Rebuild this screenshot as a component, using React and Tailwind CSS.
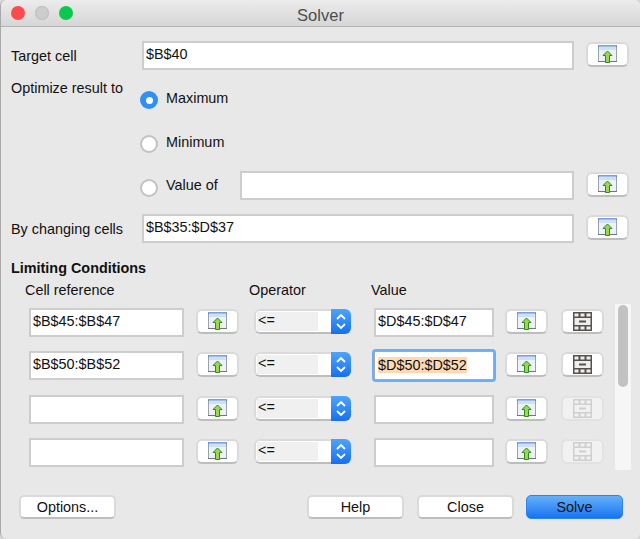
import React from "react";

const inputBase = "h-[29px] border-2 border-[#cdcdcd] bg-white px-[2px] text-[14.4px] leading-[22px] text-[#111]";
const rimmed = "border-2 border-[#dadada] border-b-[#bdbdbd] bg-white";

function RefIcon() {
  return (
    <svg width="19" height="19" viewBox="0 0 19 19">
      <rect x="0.5" y="1" width="18" height="15.5" fill="#eef2f7" stroke="#98a2ad" />
      <rect x="0" y="0.5" width="19" height="1" fill="#2d6fd6" />
      <rect x="1" y="1.5" width="17" height="3.5" fill="#cfdff6" />
      <rect x="0" y="16" width="19" height="1" fill="#6f7680" />
      <path d="M9.5 6 L14 10.5 L11.5 10.5 L11.5 17.5 L7.5 17.5 L7.5 10.5 L5 10.5 Z" fill="#9ad64f" stroke="#2f8a1f" strokeWidth="1" strokeLinejoin="round" />
    </svg>
  );
}

function StripIcon({ off }) {
  const dark = off ? "#cfcfcf" : "#55524e";
  const cell = off ? "#f1f1f1" : "#eeeeee";
  return (
    <svg width="19" height="19" viewBox="0 0 19 19">
      <rect x="0" y="0" width="19" height="19" fill={dark} />
      {[1.5, 7.5, 13.5].map((x) => (
        <React.Fragment key={x}>
          <rect x={x} y="1.5" width="4" height="3" fill={cell} />
          <rect x={x} y="14.5" width="4" height="3" fill={cell} />
        </React.Fragment>
      ))}
      <rect x="1.5" y="6" width="16" height="7" fill={cell} />
      <rect x="6" y="8.5" width="7" height="2" fill={dark} />
    </svg>
  );
}

function RefButton({ className = "" }) {
  return (
    <div className={`mt-[1px] flex h-[25px] w-[43px] items-center justify-center self-start rounded-[6px] ${rimmed} ${className}`}>
      <RefIcon />
    </div>
  );
}

function StripButton({ off }) {
  return (
    <div className={`ml-[13px] mt-[1px] flex h-[25px] w-[43px] items-center justify-center self-start rounded-[6px] ${off ? "border-2 border-[#e2e2e2] bg-[#f1f1f1]" : rimmed}`}>
      <StripIcon off={off} />
    </div>
  );
}

function Radio({ on }) {
  if (on) {
    return (
      <div className="flex h-[18px] w-[18px] shrink-0 items-center justify-center rounded-full bg-[#2f8ff5]">
        <div className="h-[7px] w-[7px] rounded-full bg-white" />
      </div>
    );
  }
  return <div className="h-[18px] w-[18px] shrink-0 rounded-full border-2 border-[#c2c2c2] bg-white" />;
}

function OperatorSelect() {
  return (
    <div className="ml-[15px] mt-[1px] flex h-[25px] w-[97px] self-start overflow-hidden rounded-[6px]">
      <div className={`flex-1 rounded-l-[6px] border-r-0 p-[1px] pr-[13px] ${rimmed}`}>
        <div className="h-[19px] bg-[#f0f0f0] pl-[1px] text-[14.4px] leading-[16px] text-[#111]">&lt;=</div>
      </div>
      <div className="flex w-[20px] items-center justify-center bg-gradient-to-b from-[#4ea3fb] to-[#1470f0]">
        <svg width="12" height="19" viewBox="0 0 12 19" fill="none" stroke="white" strokeWidth="1.8">
          <path d="M2 7 L6 3 L10 7" />
          <path d="M2 12 L6 16 L10 12" />
        </svg>
      </div>
    </div>
  );
}

function ConditionRow({ cell, value, focused, off }) {
  return (
    <div className="flex h-[29px] items-center">
      <div className={`${inputBase} w-[155px]`}>{cell}</div>
      <RefButton className="ml-[12px]" />
      <OperatorSelect />
      {focused ? (
        <div className="z-10 ml-[23px] h-[29px] w-[120px] rounded-[2px] border border-[#aaa] bg-white px-[3px] text-[14.4px] leading-[26px] text-[#111] shadow-[0_0_0_2px_#6aaef5]">
          <span className="bg-[#fdd9b5]">{value}</span>
        </div>
      ) : (
        <div className={`${inputBase} ml-[23px] w-[120px]`}>{value}</div>
      )}
      <RefButton className="ml-[11px]" />
      <StripButton off={off} />
    </div>
  );
}

function FooterButton({ label, primary, className = "" }) {
  return (
    <div className={`flex h-[24px] w-[97px] items-center justify-center rounded-[5px] text-[14.4px] text-[#111] ${primary ? "border border-[#2a83ee] bg-gradient-to-b from-[#64b0fa] to-[#1473f1]" : rimmed} ${className}`}>
      {label}
    </div>
  );
}

export default function App() {
  return (
    <div className="h-[539px] w-[640px] overflow-hidden bg-[#d8d8d8] font-['Liberation_Sans',Arial,sans-serif]">
      <div className="flex h-[539px] flex-col rounded-[6px] border-l border-[#a8a8a8] bg-[#e8e8e8] text-[14.4px] leading-[20px] text-[#111]">
        {/* title bar */}
        <div className="relative flex h-[27px] shrink-0 items-center rounded-t-[6px] border-b border-[#b4b4b4] bg-gradient-to-b from-[#ececec] to-[#d6d6d6] pl-[10px]">
          <div className="h-[14px] w-[14px] rounded-full bg-[#fc4a4e]" />
          <div className="ml-[10px] h-[14px] w-[14px] rounded-full bg-[#cdcdcd] shadow-[inset_0_0_0_1px_#c0c0c0]" />
          <div className="ml-[10px] h-[14px] w-[14px] rounded-full bg-[#0ac94e]" />
          <div className="absolute inset-x-0 top-[5px] text-center text-[16.5px] leading-[20px] text-[#4d4d4d]">Solver</div>
        </div>

        {/* target cell */}
        <div className="mt-[14px] flex items-center pl-[10px]">
          <div className="w-[131px]">Target cell</div>
          <div className={`${inputBase} w-[432px]`}>$B$40</div>
          <RefButton className="ml-[12px]" />
        </div>

        {/* optimize */}
        <div className="flex pl-[10px]">
          <div className="w-[129px] pt-[8px]">Optimize result to</div>
          <div className="flex flex-col">
            <div className="mt-[8px] flex h-[44px] items-center">
              <Radio on />
              <span className="ml-[8px] -translate-y-[2px]">Maximum</span>
            </div>
            <div className="flex h-[43px] items-center">
              <Radio />
              <span className="ml-[8px] -translate-y-[2px]">Minimum</span>
            </div>
            <div className="mt-[6px] flex h-[29px] items-center">
              <div className="translate-y-[2px]">
                <Radio />
              </div>
              <span className="ml-[8px] w-[74px] -translate-y-[1px]">Value of</span>
              <div className={`${inputBase} w-[334px]`} />
              <RefButton className="ml-[12px]" />
            </div>
          </div>
        </div>

        {/* changing cells */}
        <div className="mt-[14px] flex items-center pl-[10px]">
          <div className="w-[131px]">By changing cells</div>
          <div className={`${inputBase} w-[432px]`}>$B$35:$D$37</div>
          <RefButton className="ml-[12px]" />
        </div>

        {/* conditions */}
        <div className="mt-[15px] pl-[10px] font-bold">Limiting Conditions</div>
        <div className="mt-[2px] flex pl-[24px]">
          <div className="w-[224px]">Cell reference</div>
          <div className="w-[122px]">Operator</div>
          <div>Value</div>
        </div>
        <div className="mt-[8px] flex pl-[28px]">
          <div className="flex flex-col gap-[14.33px]">
            <ConditionRow cell="$B$45:$B$47" value="$D$45:$D$47" />
            <ConditionRow cell="$B$50:$B$52" value="$D$50:$D$52" focused />
            <ConditionRow off />
            <ConditionRow off />
          </div>
          <div className="-mt-[4px] ml-[11px] h-[166px] w-[16px] bg-[#f6f6f6] px-[3px] pt-[1px]">
            <div className="h-[82px] w-[10px] rounded-full bg-[#c2c2c2]" />
          </div>
        </div>

        {/* footer */}
        <div className="mb-[20px] mt-auto flex pl-[18px]">
          <FooterButton label="Options..." />
          <FooterButton label="Help" className="ml-[191px]" />
          <FooterButton label="Close" className="ml-[13px]" />
          <FooterButton label="Solve" primary className="ml-[12px]" />
        </div>
      </div>
    </div>
  );
}
